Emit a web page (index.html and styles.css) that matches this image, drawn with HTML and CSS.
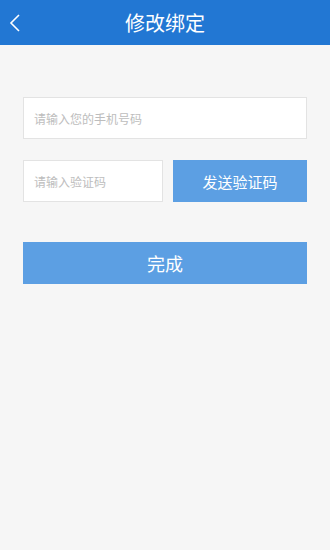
FILE: index.html
```html
<!DOCTYPE html>
<html lang="zh">
<head>
<meta charset="utf-8">
<link rel="stylesheet" href="styles.css">
</head>
<body>
<header class="bar">
  <span class="back"><svg width="12" height="20" viewBox="0 0 12 20"><path d="M10 2 L2 10 L10 18" fill="none" stroke="#fff" stroke-width="1.6"/></svg></span>
  <h1 class="title">修改绑定</h1>
</header>
<main class="form">
  <div class="field full">请输入您的手机号码</div>
  <div class="row">
    <div class="field code">请输入验证码</div>
    <div class="btn send">发送验证码</div>
  </div>
  <div class="btn done">完成</div>
</main>
</body>
</html>
```
FILE: styles.css
```css
html, body { margin: 0; padding: 0; }
body {
  width: 330px; height: 550px;
  background: #f6f6f6;
  font-family: "Noto Sans CJK SC", "Noto Sans", sans-serif;
}
.bar {
  position: relative;
  height: 45px;
  background: #2277d3;
  display: flex; align-items: center; justify-content: center;
}
.back { position: absolute; left: 9px; top: 13px; display: flex; }
.title { margin: 0; color: #fff; font-size: 20px; font-weight: 400; line-height: 45px; }
.form { padding: 52px 23px 0 23px; display: flex; flex-direction: column; }
.field {
  box-sizing: border-box;
  background: #fff;
  border: 1px solid #e3e3e3;
  height: 42px;
  padding-left: 10px;
  display: flex; align-items: center;
  font-size: 12px; color: #bdbdbd;
}
.row { display: flex; gap: 10px; margin-top: 21px; }
.code { width: 140px; height: 42px; }
.btn {
  background: #5c9fe3;
  color: #fff;
  display: flex; align-items: center; justify-content: center;
}
.send { flex: 1; height: 42px; font-size: 15px; }
.done { margin-top: 40px; height: 42px; font-size: 18px; }
```
